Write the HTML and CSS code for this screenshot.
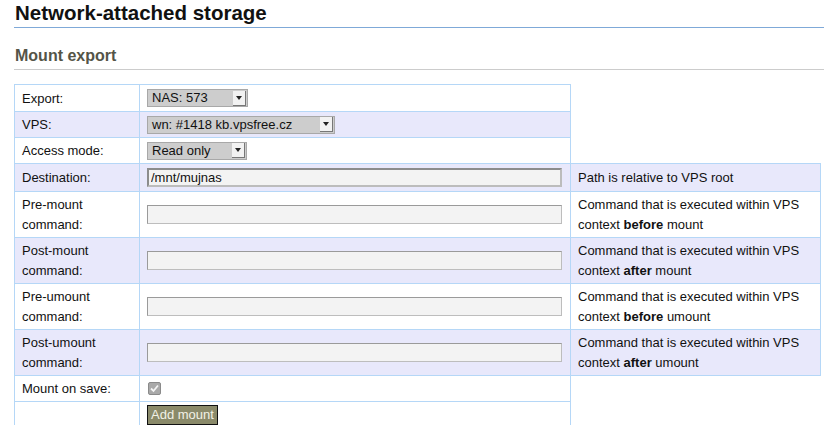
FILE: index.html
```html
<!DOCTYPE html>
<html>
<head>
<meta charset="utf-8">
<link rel="stylesheet" href="styles.css">
</head>
<body>
<div class="page">
  <h1 class="title">Network-attached storage</h1>
  <h2 class="subtitle">Mount export</h2>
  <table class="form">
    <colgroup><col class="c1"><col class="c2"><col class="c3"></colgroup>
    <tr class="first">
      <td>Export:</td>
      <td><span class="sel w1"><span class="sel-text">NAS: 573</span><span class="sel-btn"><span class="tri"></span></span></span></td>
    </tr>
    <tr class="alt">
      <td>VPS:</td>
      <td><span class="sel w2"><span class="sel-text">wn: #1418 kb.vpsfree.cz</span><span class="sel-btn"><span class="tri"></span></span></span></td>
    </tr>
    <tr>
      <td>Access mode:</td>
      <td><span class="sel w3"><span class="sel-text">Read only</span><span class="sel-btn"><span class="tri"></span></span></span></td>
    </tr>
    <tr class="alt dest">
      <td>Destination:</td>
      <td><input class="txt txt-dest" type="text" value="/mnt/mujnas"></td>
      <td>Path is relative to VPS root</td>
    </tr>
    <tr class="two">
      <td>Pre-mount command:</td>
      <td><input class="txt" type="text"></td>
      <td>Command that is executed within VPS context <b>before</b> mount</td>
    </tr>
    <tr class="alt two">
      <td>Post-mount command:</td>
      <td><input class="txt" type="text"></td>
      <td>Command that is executed within VPS context <b>after</b> mount</td>
    </tr>
    <tr class="two">
      <td>Pre-umount command:</td>
      <td><input class="txt" type="text"></td>
      <td>Command that is executed within VPS context <b>before</b> umount</td>
    </tr>
    <tr class="alt two last-two">
      <td>Post-umount command:</td>
      <td><input class="txt" type="text"></td>
      <td>Command that is executed within VPS context <b>after</b> umount</td>
    </tr>
    <tr class="check">
      <td>Mount on save:</td>
      <td><span class="chk"><svg width="11" height="11" viewBox="0 0 11 11"><path d="M2 5.5 L4.5 8 L9 2.5" fill="none" stroke="#f4f4f4" stroke-width="1.8"/></svg></span></td>
    </tr>
    <tr>
      <td></td>
      <td><button class="btn" type="button">Add mount</button></td>
    </tr>
  </table>
</div>
</body>
</html>
```

FILE: styles.css
```css
html, body {
  margin: 0;
  padding: 0;
  background: #fff;
}
body {
  font-family: "Liberation Sans", Arial, sans-serif;
  font-size: 13px;
  color: #111;
}
.page {
  padding-left: 14px;
  overflow: hidden;
  height: 425px;
}
.title {
  margin: 0;
  padding: 1px 0 3px 1px;
  font-size: 20.5px;
  line-height: 23px;
  font-weight: bold;
  color: #111;
  border-bottom: 1px solid #7fa9d8;
}
.subtitle {
  margin: 18px 0 0 0;
  padding: 0 0 3px 1px;
  font-size: 16px;
  line-height: 20px;
  font-weight: bold;
  color: #545447;
  border-bottom: 1px solid #cccccc;
}
.form {
  margin-top: 14px;
  border-collapse: collapse;
  table-layout: fixed;
  width: 806px;
}
.c1 { width: 125px; }
.c2 { width: 431px; }
.c3 { width: 250px; }
.form td {
  border: 1px solid #b5d7f7;
  padding: 3px 7px;
  line-height: 19px;
  height: 19px;
  vertical-align: middle;
}
.form tr.first td { height: 20px; }
.form tr.alt td {
  background: #e8e8fb;
}
.form tr.dest td {
  height: 21px;
}
.form tr.two td {
  height: 39px;
  line-height: 19.5px;
}
.form tr.last-two td {
  height: 38px;
}
.form tr.check td {
  height: 18px;
}
.sel {
  display: flex;
  height: 16px;
  border: 1px solid #a8a8a8;
  background: #cdcdcd;
  box-sizing: content-box;
}
.w1 { width: 99px; }
.w2 { width: 186px; }
.w3 { width: 98px; }
.sel-text {
  flex: 1;
  padding-left: 4px;
  line-height: 16px;
  font-size: 13px;
  color: #111;
  white-space: nowrap;
  overflow: hidden;
}
.sel-btn {
  width: 12px;
  height: 14px;
  margin: 0 1px 0 0;
  align-self: center;
  background: #f2f2f2;
  border-right: 1px solid #777;
  border-bottom: 1px solid #777;
  display: flex;
  align-items: center;
  justify-content: center;
}
.tri {
  width: 0;
  height: 0;
  border-left: 3px solid transparent;
  border-right: 3px solid transparent;
  border-top: 4px solid #222;
}
.txt {
  display: block;
  box-sizing: border-box;
  width: 415px;
  height: 19px;
  margin: 0;
  padding: 0 2px;
  font-family: "Liberation Sans", Arial, sans-serif;
  font-size: 13px;
  color: #111;
  background: #f3f3f3;
  border: 1px solid #bdbdbd;
  border-top-color: #9a9a9a;
  border-left-color: #9a9a9a;
}
.txt-dest {
  border: 2px solid #8c8c8c;
  border-bottom-color: #bcbcbc;
  border-right-color: #bcbcbc;
}
.chk {
  display: flex;
  align-items: center;
  justify-content: center;
  width: 11px;
  height: 11px;
  margin-left: 1px;
  background: #a9a9a9;
  border: 1px solid #8a8a8a;
  border-radius: 2px;
}
.chk svg { display: block; }
.btn {
  display: block;
  margin: 0;
  padding: 0 3px;
  height: 20px;
  font-family: "Liberation Sans", Arial, sans-serif;
  font-size: 13px;
  line-height: 18px;
  color: #f1f1e6;
  background: #8a8a6a;
  border: 1px solid #111;
}
```
